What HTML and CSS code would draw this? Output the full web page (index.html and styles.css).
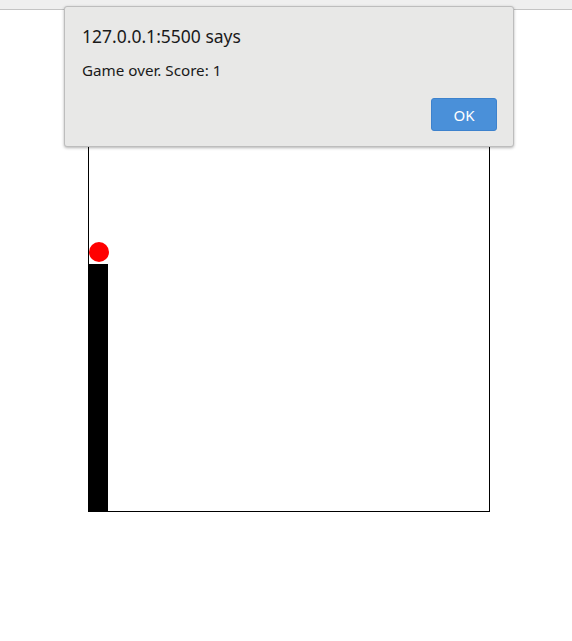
FILE: index.html
```html
<!DOCTYPE html>
<html>
<head>
<meta charset="utf-8">
<link rel="stylesheet" href="styles.css">
</head>
<body>
<div class="topbar"></div>
<div class="stage">
  <svg class="game" width="402" height="402" viewBox="0 0 402 402">
    <rect x="0.5" y="0.5" width="401" height="401" fill="#fff" stroke="#000" stroke-width="1"/>
    <rect x="0" y="154" width="20" height="248" fill="#000"/>
    <circle cx="11" cy="142" r="10" fill="#ff0000"/>
  </svg>
</div>
<div class="dialog">
  <div class="title">127.0.0.1:5500 says</div>
  <div class="message">Game over. Score: 1</div>
  <div class="actions"><button class="ok">OK</button></div>
</div>
</body>
</html>
```
FILE: styles.css
```css
html, body {
  margin: 0;
  padding: 0;
  background: #fff;
  font-family: "Noto Sans", "DejaVu Sans", sans-serif;
}
.topbar {
  height: 9px;
  background: #efefef;
  border-bottom: 1px solid #c4c4c4;
}
.stage {
  padding-top: 100px;
  padding-left: 88px;
}
.game {
  display: block;
}
.dialog {
  position: absolute;
  left: 64px;
  top: 6px;
  width: 448px;
  height: 139px;
  box-sizing: content-box;
  background: #e8e8e7;
  border: 1px solid #bdbdbd;
  border-radius: 3px;
  box-shadow: 0 1px 3px rgba(0,0,0,0.3);
  padding: 0;
}
.title {
  margin: 17px 0 0 17px;
  font-size: 17.5px;
  line-height: 24px;
  color: #1a1a1a;
}
.message {
  margin: 12px 0 0 17px;
  font-size: 15.2px;
  line-height: 20px;
  color: #1a1a1a;
}
.actions {
  display: flex;
  justify-content: flex-end;
  padding: 0 16px 0 0;
  margin-top: 18px;
}
.ok {
  width: 66px;
  height: 33px;
  background: #4a90d9;
  border: 1px solid #3d82cd;
  border-radius: 3px;
  color: #fff;
  font-family: "Noto Sans", "DejaVu Sans", sans-serif;
  font-size: 15px;
  padding: 0;
}
```
